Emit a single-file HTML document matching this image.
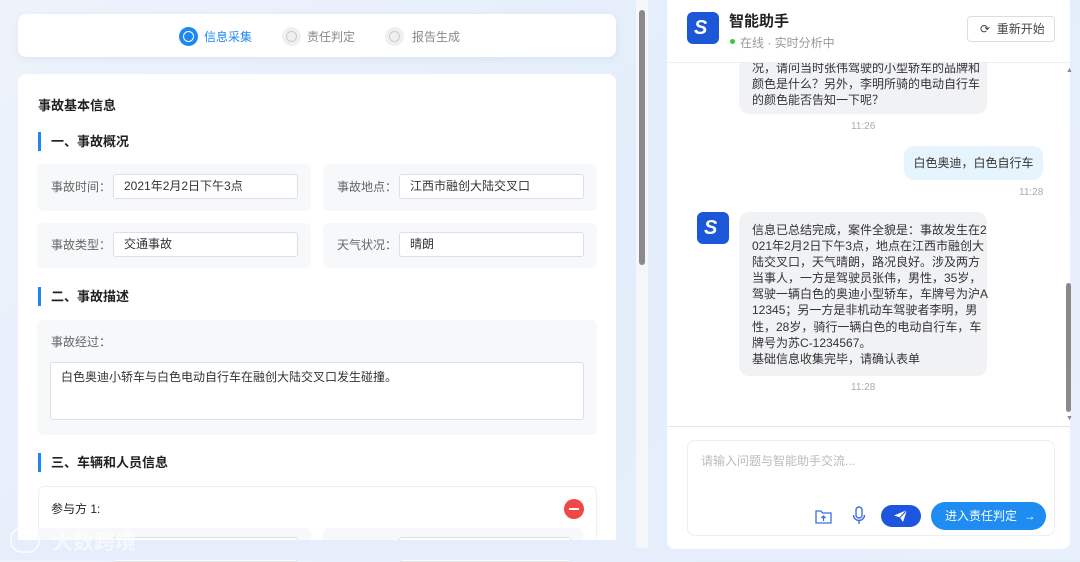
<!DOCTYPE html>
<html><head><meta charset="utf-8"><style>
*{margin:0;padding:0;box-sizing:border-box}
body{width:1080px;height:560px;overflow:hidden;position:relative;font-family:"Liberation Sans","Noto Sans CJK SC",sans-serif;background:linear-gradient(135deg,#eef3fb 0%,#e3edfb 50%,#e8f0fb 100%);color:#333}
.abs{position:absolute}
.card{background:#fff;border-radius:8px;box-shadow:0 2px 8px rgba(0,40,120,.06)}
.lab{font-size:12px;color:#666}
.inp{position:absolute;background:#fff;border:1px solid #dcdfe6;border-radius:3px;font-size:12px;color:#333;padding-left:10px;line-height:23px}
.fbox{position:absolute;background:#f7f8fa;border-radius:6px}
.h2{position:absolute;left:38px;height:19px;border-left:3px solid #1e88f0;padding-left:10px;font-size:13px;font-weight:bold;color:#222;line-height:19px}
.bub{position:absolute;background:#f1f2f4;border-radius:10px;font-size:12px;line-height:16.1px;color:#333;padding:0 0 0 13px;white-space:nowrap}
.time{position:absolute;font-size:10px;color:#aaa}
.logo{position:absolute;width:32px;height:32px;background:#1b57d6;border-radius:6px}
</style></head><body>
<div class="card abs" style="left:18px;top:14px;width:598px;height:43px"></div>
<div class="abs" style="left:179px;top:27px;width:19px;height:19px;border-radius:50%;background:#1e88f0"></div>
<div class="abs" style="left:183px;top:31px;width:11px;height:11px;border-radius:50%;border:1.5px solid #fff"></div>
<div class="abs" style="left:204px;top:28px;font-size:12px;color:#1e88f0">信息采集</div>
<div class="abs" style="left:282px;top:27px;width:19px;height:19px;border-radius:50%;background:#f0f0f0"></div>
<div class="abs" style="left:286px;top:31px;width:11px;height:11px;border-radius:50%;border:1px solid #ccc"></div>
<div class="abs" style="left:307px;top:28px;font-size:12px;color:#888">责任判定</div>
<div class="abs" style="left:385px;top:27px;width:19px;height:19px;border-radius:50%;background:#f0f0f0"></div>
<div class="abs" style="left:389px;top:31px;width:11px;height:11px;border-radius:50%;border:1px solid #ccc"></div>
<div class="abs" style="left:412px;top:28px;font-size:12px;color:#888">报告生成</div>

<div class="abs" style="left:18px;top:74px;width:598px;height:466px;background:#fff;border-radius:8px 8px 0 0"></div>
<div class="abs" style="left:38px;top:95px;font-size:13px;font-weight:bold;color:#222">事故基本信息</div>
<div class="h2" style="top:132px">一、事故概况</div>
<div class="fbox" style="left:37px;top:164px;width:274px;height:47px"></div>
<div class="fbox" style="left:323px;top:164px;width:274px;height:47px"></div>
<div class="fbox" style="left:37px;top:223px;width:274px;height:45px"></div>
<div class="fbox" style="left:323px;top:223px;width:274px;height:45px"></div>
<div class="abs lab" style="left:51px;top:178px">事故时间：</div>
<div class="inp" style="left:113px;top:174px;width:185px;height:25px">2021年2月2日下午3点</div>
<div class="abs lab" style="left:337px;top:178px">事故地点：</div>
<div class="inp" style="left:399px;top:174px;width:185px;height:25px">江西市融创大陆交叉口</div>
<div class="abs lab" style="left:51px;top:236px">事故类型：</div>
<div class="inp" style="left:113px;top:232px;width:185px;height:25px">交通事故</div>
<div class="abs lab" style="left:337px;top:236px">天气状况：</div>
<div class="inp" style="left:399px;top:232px;width:185px;height:25px">晴朗</div>
<div class="h2" style="top:287px">二、事故描述</div>
<div class="fbox" style="left:37px;top:320px;width:560px;height:115px"></div>
<div class="abs lab" style="left:51px;top:333px">事故经过：</div>
<div class="inp" style="left:50px;top:362px;width:534px;height:58px;line-height:28px">白色奥迪小轿车与白色电动自行车在融创大陆交叉口发生碰撞。</div>
<div class="h2" style="top:453px">三、车辆和人员信息</div>
<div class="abs" style="left:38px;top:486px;width:559px;height:60px;border:1px solid #eef0f3;border-radius:6px;background:#fff"></div>
<div class="abs" style="left:51px;top:500px;font-size:12px;color:#222">参与方 1:</div>
<div class="abs" style="left:564px;top:499px;width:20px;height:20px;border-radius:50%;background:#f04848"></div>
<div class="abs" style="left:569px;top:508px;width:10px;height:1.5px;background:#fff"></div>
<div class="fbox" style="left:37px;top:528px;width:274px;height:20px"></div>
<div class="fbox" style="left:323px;top:528px;width:260px;height:20px"></div>
<div class="inp" style="left:113px;top:537px;width:185px;height:25px;color:#bbb">张伟</div>
<div class="abs lab" style="left:337px;top:542px">联系电话：</div>
<div class="inp" style="left:399px;top:537px;width:172px;height:25px;color:#bbb">请输入联系电话</div>
<div class="abs" style="left:0;top:540px;width:660px;height:20px;background:#e6eefb"></div>
<div class="abs" style="left:10px;top:527px;width:30px;height:26px;border:2px solid rgba(255,255,255,.7);border-radius:12px"></div>
<div class="abs" style="left:52px;top:526px;font-size:21px;font-weight:bold;color:rgba(255,255,255,.6)">大数跨境</div>
<div class="abs" style="left:636px;top:0;width:12px;height:548px;background:#f4f6fa"></div>
<div class="abs" style="left:639px;top:10px;width:6px;height:255px;border-radius:3px;background:#8a8a8a"></div>

<div class="abs" style="left:667px;top:0;width:403px;height:549px;background:#fff;border-radius:0 0 8px 8px"></div>
<div class="logo" style="left:687px;top:12px"></div>
<div class="abs" style="left:694px;top:18px;color:#fff;font-weight:bold;font-style:italic;font-size:20px;line-height:20px">S</div>
<div class="abs" style="left:729px;top:10px;font-size:15px;font-weight:bold;color:#222">智能助手</div>
<div class="abs" style="left:730px;top:39px;width:5px;height:5px;border-radius:50%;background:#3cc23c"></div>
<div class="abs" style="left:740px;top:34px;font-size:12px;color:#999">在线 · 实时分析中</div>
<div class="abs" style="left:967px;top:16px;width:88px;height:26px;border:1px solid #ddd;border-radius:4px;font-size:12px;color:#444;line-height:24px;padding-left:12px">⟳&nbsp; 重新开始</div>
<div class="abs" style="left:667px;top:62px;width:403px;height:1px;background:#eee"></div>
<div class="abs" style="left:667px;top:63px;width:403px;height:363px;overflow:hidden">
 <div class="bub" style="left:72px;top:-40px;width:248px;height:91px;padding-top:37px">况，请问当时张伟驾驶的小型轿车的品牌和<br>颜色是什么？另外，李明所骑的电动自行车<br>的颜色能否告知一下呢？</div>
</div>
<div class="time" style="left:851px;top:121px">11:26</div>
<div class="abs" style="left:904px;top:146px;width:139px;height:34px;background:#e6f4fe;border-radius:10px;font-size:12px;line-height:34px;text-align:center">白色奥迪，白色自行车</div>
<div class="time" style="left:1019px;top:187px">11:28</div>
<div class="logo" style="left:697px;top:212px"></div>
<div class="abs" style="left:704px;top:218px;color:#fff;font-weight:bold;font-style:italic;font-size:20px;line-height:20px">S</div>
<div class="bub" style="left:739px;top:212px;width:248px;height:164px;padding-top:10px">信息已总结完成，案件全貌是：事故发生在2<br>021年2月2日下午3点，地点在江西市融创大<br>陆交叉口，天气晴朗，路况良好。涉及两方<br>当事人，一方是驾驶员张伟，男性，35岁，<br>驾驶一辆白色的奥迪小型轿车，车牌号为沪A<br>12345；另一方是非机动车驾驶者李明，男<br>性，28岁，骑行一辆白色的电动自行车，车<br>牌号为苏C-1234567。<br>基础信息收集完毕，请确认表单</div>
<div class="time" style="left:851px;top:382px">11:28</div>
<div class="abs" style="left:1066px;top:67px;font-size:7px;color:#888">▲</div>
<div class="abs" style="left:1066px;top:283px;width:5px;height:129px;border-radius:3px;background:#8a8a8a"></div>
<div class="abs" style="left:1066px;top:415px;font-size:7px;color:#888">▼</div>
<div class="abs" style="left:667px;top:426px;width:403px;height:1px;background:#e6e6e6"></div>
<div class="abs" style="left:687px;top:440px;width:368px;height:96px;border:1px solid #eee;border-radius:8px"></div>
<div class="abs" style="left:701px;top:452px;font-size:12px;color:#bbb">请输入问题与智能助手交流...</div>
<svg class="abs" style="left:815px;top:508px" width="17" height="16" viewBox="0 0 17 16" fill="none" stroke="#3a6fe0" stroke-width="1.3"><path d="M1 3h5l1.5 2H16v10H1z"/><path d="M8.5 13V8M6.5 10l2-2 2 2"/></svg>
<svg class="abs" style="left:852px;top:506px" width="14" height="20" viewBox="0 0 14 20" fill="none" stroke="#3a6fe0" stroke-width="1.4"><rect x="4" y="1" width="6" height="11" rx="3"/><path d="M1.5 9a5.5 5.5 0 0011 0M7 14.5V18"/></svg>
<div class="abs" style="left:881px;top:505px;width:40px;height:22px;border-radius:11px;background:#1e55e0"></div>
<svg class="abs" style="left:893px;top:509px" width="15" height="14" viewBox="0 0 15 14"><path d="M1 6.5L14 1 10 13 7 8.5z" fill="#fff"/><path d="M7 8.5L14 1" stroke="#1e55e0" stroke-width="1"/></svg>
<div class="abs" style="left:931px;top:502px;width:115px;height:28px;border-radius:14px;background:#1e8cf0;color:#fff;font-size:12px;line-height:28px;padding-left:14px">进入责任判定 &nbsp;→</div>
</body></html>
